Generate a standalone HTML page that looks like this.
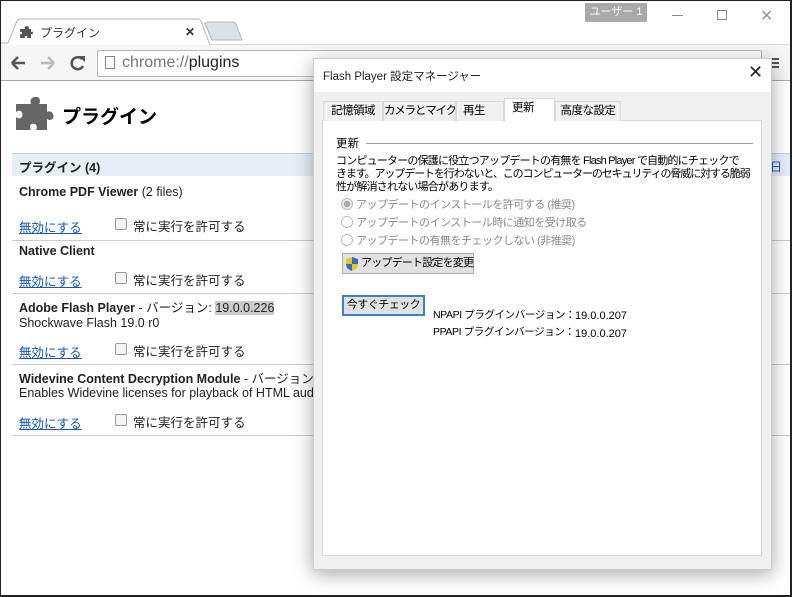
<!DOCTYPE html>
<html><head><meta charset="utf-8"><style>
*{margin:0;padding:0;box-sizing:border-box}
body{width:792px;height:597px;overflow:hidden;background:#fff;font-family:"Liberation Sans","Noto Sans CJK JP",sans-serif;position:relative}
.a{position:absolute;white-space:nowrap}
.frame{left:0;top:0;width:792px;height:597px;border:1px solid #222;border-right-width:2px;border-bottom-width:2px;pointer-events:none;z-index:50}
.jp{font-family:"Liberation Sans","Noto Sans CJK JP",sans-serif}
.lnk{color:#15c;text-decoration:underline;font-size:12.5px}
.cb{width:12px;height:12px;border:1px solid #999;border-radius:2px;background:#f4f4f4}
.row{font-size:12.5px;color:#222}
.hr{height:1px;background:#ccc;left:12px;width:780px}
.tab{top:42px;height:20px;border:1px solid #d9d9d9;border-bottom:none;background:#f0f0f0;font-size:11.5px;text-align:center;line-height:19px;color:#000;letter-spacing:-0.5px;overflow:hidden}
</style></head><body>
<div class="a frame"></div>
<div class="a jp" style="left:585px;top:3px;width:62px;height:19px;background:#a9a9a9;color:#fff;font-size:11px;line-height:19px;text-align:center">ユーザー 1</div>
<div class="a" style="left:672px;top:15px;width:11px;height:1px;background:#888"></div>
<div class="a" style="left:717px;top:10px;width:10px;height:10px;border:1px solid #888"></div>
<div class="a" style="left:760px;top:6px;font-size:16px;color:#999">✕</div>
<svg class="a" style="left:0;top:18px" width="792" height="28"><path d="M0 25 L8 25 L17 3 Q18 1 21 1 L197 1 Q200 1 201 3 L210 27 L792 27" fill="#fff" stroke="#b5b5b5"/><path d="M205 6 Q206 4 209 4 L232 4 Q235 4 236 6 L242 22 L212 22 Z" fill="#dde1e7" stroke="#b5b5b5"/></svg>
<svg class="a" style="left:20px;top:26px" width="13" height="13"><path d="M2 3 H5 Q4 0 7 0 Q9 0 9 3 H11 V6 Q13 5 13 7 Q13 9 11 8 V12 H7 Q8 10 6 10 Q4 10 5 12 H0 V8 Q2 9 2 7 Q2 5 0 6 V3 Z" fill="#555"/></svg>
<div class="a jp" style="left:40px;top:24px;font-size:12px;color:#333">プラグイン</div>
<div class="a" style="left:185px;top:25px;font-size:12px;color:#333;font-weight:bold">✕</div>
<div class="a" style="left:0;top:45px;width:792px;height:36px;background:#f6f6f6;border-bottom:1px solid #aaa"></div>
<svg class="a" style="left:10px;top:55px" width="80" height="16"><path d="M2 8 H15 M2 8 L8 2 M2 8 L8 14" stroke="#555" stroke-width="2.5" fill="none"/><path d="M31 8 H44 M44 8 L38 2 M44 8 L38 14" stroke="#bbb" stroke-width="2.5" fill="none"/><path d="M72 4 A6 6 0 1 0 73 11" stroke="#555" stroke-width="2.5" fill="none"/><path d="M68 1 L75 1 L75 7 Z" fill="#555"/></svg>
<div class="a" style="left:97px;top:50px;width:665px;height:27px;background:#fff;border:1px solid #bbb;border-radius:2px"></div>
<div class="a" style="left:105px;top:56px;width:10px;height:13px;border:1px solid #888"></div>
<div class="a" style="left:122px;top:54px;font-size:16px;color:#777">chrome://<span style="color:#222">plugins</span></div>
<div class="a" style="left:767px;top:58px;width:12px;height:2px;background:#555;box-shadow:0 4px 0 #555,0 8px 0 #555"></div>
<svg class="a" style="left:15px;top:95px" width="42" height="42"><path d="M8 9 H16 Q14 4 19 2 Q25 1 25 6 Q25 8 24 9 H32 V17 Q36 15 38 19 Q40 24 35 25 Q33 25 32 24 V35 H21 Q23 31 20 29 Q15 28 15 32 Q15 34 16 35 H1 V22 Q3 24 6 23 Q9 20 6 16 Q3 15 1 17 V9 Z" fill="#666"/></svg>
<div class="a jp" style="left:62px;top:102px;font-size:19px;font-weight:bold;color:#000">プラグイン</div>
<div class="a" style="left:12px;top:153px;width:780px;height:23px;background:#e8eef7;border-top:1px solid #c6d2e3"></div>
<div class="a jp row" style="left:19px;top:157px;font-weight:bold">プラグイン (4)</div>
<div class="a" style="left:770px;top:158px;color:#15c;font-size:12px">日</div>

<div class="a row" style="left:19px;top:185px"><b>Chrome PDF Viewer</b> (2 files)</div>
<div class="a jp lnk" style="left:19px;top:217px">無効にする</div><div class="a cb" style="left:115px;top:218px"></div><div class="a jp row" style="left:133px;top:216px">常に実行を許可する</div>
<div class="a hr" style="top:240px"></div>
<div class="a row" style="left:19px;top:244px"><b>Native Client</b></div>
<div class="a jp lnk" style="left:19px;top:271px">無効にする</div><div class="a cb" style="left:115px;top:272px"></div><div class="a jp row" style="left:133px;top:270px">常に実行を許可する</div>
<div class="a hr" style="top:293px"></div>
<div class="a row jp" style="left:19px;top:297px"><b>Adobe Flash Player</b> - バージョン: <span style="background:#ccc">19.0.0.226</span></div>
<div class="a row" style="left:19px;top:316px">Shockwave Flash 19.0 r0</div>
<div class="a jp lnk" style="left:19px;top:342px">無効にする</div><div class="a cb" style="left:115px;top:343px"></div><div class="a jp row" style="left:133px;top:341px">常に実行を許可する</div>
<div class="a hr" style="top:364px"></div>
<div class="a row jp" style="left:19px;top:368px"><b>Widevine Content Decryption Module</b> - バージョン: 1</div>
<div class="a row" style="left:19px;top:386px">Enables Widevine licenses for playback of HTML audio/v</div>
<div class="a jp lnk" style="left:19px;top:413px">無効にする</div><div class="a cb" style="left:115px;top:414px"></div><div class="a jp row" style="left:133px;top:412px">常に実行を許可する</div>
<div class="a hr" style="top:435px"></div>

<div class="a" style="left:313px;top:58px;width:459px;height:512px;background:#f0f0f0;border:1px solid #ccc;box-shadow:0 4px 18px rgba(0,0,0,.35);z-index:5">
 <div class="a" style="left:0;top:0;width:457px;height:33px;background:#fff"></div>
 <div class="a jp" style="left:9px;top:9px;font-size:11.5px;color:#222">Flash Player 設定マネージャー</div>
 <div class="a" style="left:434px;top:3px;font-size:18px;color:#222">✕</div>
 <div class="a" style="left:8px;top:61px;width:440px;height:436px;background:#fff;border:1px solid #d9d9d9"></div>
 <div class="a tab jp" style="left:9px;width:60px">記憶領域</div>
 <div class="a tab jp" style="left:69px;width:73px;letter-spacing:-1.2px">カメラとマイク</div>
 <div class="a tab jp" style="left:142px;width:48px;text-align:left;padding-left:6px">再生</div>
 <div class="a tab jp" style="left:190px;top:39px;width:51px;height:23px;background:#fff;text-align:left;padding-left:7px;line-height:19px">更新</div>
 <div class="a tab jp" style="left:241px;width:66px">高度な設定</div>
 <div class="a jp" style="left:22px;top:76px;font-size:11.5px;color:#000">更新</div>
 <div class="a" style="left:52px;top:84px;width:387px;height:1px;background:#a0a0a0"></div>
 <div class="a jp" style="left:22px;top:96px;font-size:11px;line-height:13px;color:#000;letter-spacing:-0.8px">コンピューターの保護に役立つアップデートの有無を Flash Player で自動的にチェックで<br><span style="letter-spacing:-1.1px">きます。アップデートを行わないと、このコンピューターのセキュリティの脅威に対する脆弱</span><br>性が解消されない場合があります。</div>
 <div class="a jp" style="left:27px;top:137px;font-size:11px;color:#8a8a8a;line-height:18px;letter-spacing:-0.5px">
  <div><span style="display:inline-block;width:12px;height:12px;border:1px solid #bbb;border-radius:50%;vertical-align:-2px;margin-right:3px;background:radial-gradient(#aaa 3px,#eee 3.5px)"></span>アップデートのインストールを許可する (推奨)</div>
  <div><span style="display:inline-block;width:12px;height:12px;border:1px solid #bbb;border-radius:50%;vertical-align:-2px;margin-right:3px"></span>アップデートのインストール時に通知を受け取る</div>
  <div><span style="display:inline-block;width:12px;height:12px;border:1px solid #bbb;border-radius:50%;vertical-align:-2px;margin-right:3px"></span>アップデートの有無をチェックしない (非推奨)</div>
 </div>
 <div class="a jp" style="left:28px;top:194px;width:132px;height:21px;background:#e1e1e1;border:1px solid #adadad;font-size:11px;line-height:19px;padding-left:18px;color:#000;letter-spacing:-0.8px"><svg class="a" style="left:2px;top:2px" width="14" height="16"><path d="M7 1 L13 3 V8 Q13 13 7 15 Q1 13 1 8 V3 Z" fill="#f2c21b"/><path d="M7 1 L13 3 V8 H7 Z M7 8 H1 Q1 13 7 15 Z" fill="#2a6fd6"/></svg>アップデート設定を変更</div>
 <div class="a jp" style="left:28px;top:236px;width:83px;height:21px;background:#e1e1e1;border:2px solid #3c7fd1;font-size:11px;line-height:17px;text-align:center;color:#000;letter-spacing:-0.5px">今すぐチェック</div>
 <div class="a jp" style="left:119px;top:248px;font-size:10.5px;color:#000;letter-spacing:-0.4px">NPAPI プラグインバージョン：</div>
 <div class="a" style="left:261px;top:251px;font-size:11px;color:#000">19.0.0.207</div>
 <div class="a jp" style="left:119px;top:265px;font-size:10.5px;color:#000;letter-spacing:-0.4px">PPAPI プラグインバージョン：</div>
 <div class="a" style="left:261px;top:269px;font-size:11px;color:#000">19.0.0.207</div>
</div>
</body></html>
